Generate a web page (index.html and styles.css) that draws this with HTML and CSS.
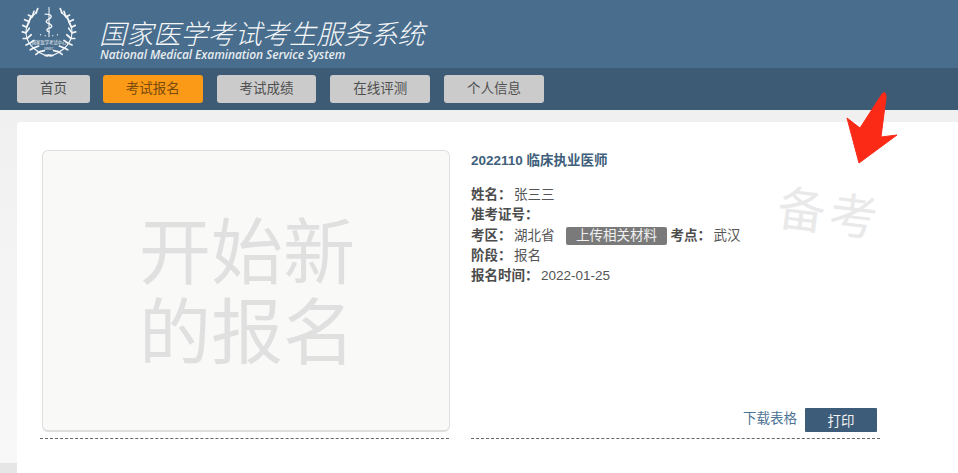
FILE: index.html
```html
<!DOCTYPE html>
<html lang="zh-CN">
<head>
<meta charset="utf-8">
<title>国家医学考试考生服务系统</title>
<link rel="stylesheet" href="styles.css">
</head>
<body>
<div class="page">
  <header class="top">
    <svg class="logo" viewBox="-2 0 64 60" width="60" height="60" aria-hidden="true">
      <defs>
        <g id="half" fill="none" stroke="#f2f5f7" stroke-linecap="round">
          <path class="wreath" d="M17 10C8 17 4 27 6 36C8 45 17 53 28 57"/>
          <path class="leaves" d="M16 11L18 6M12 15L14 9M12 15L8 13M8.500 20L11 14M8.500 20L4 18M6 26L9 20M6 26L2 24M5.500 32L9 27M5.500 32L1.500 31M6.500 38L11 34M6.500 38L2.500 38M9.500 43L14 40M9.500 43L5.500 45M14 48L19 46M14 48L10 50M20 52L25 51M20 52L16 55M26 56L31 56"/>
        </g>
      </defs>
      <use href="#half"/>
      <use href="#half" transform="translate(60 0) scale(-1 1)"/>
      <g fill="none" stroke="#f2f5f7" stroke-linecap="round">
        <path class="staff" d="M30 5V36"/>
        <path class="snake" d="M26 12C33 12 34 15 30 17C26 19 26 21 30 22C34 24 34 26 30 27C27 28 27 30 30 31"/>
      </g>
      <g fill="#f2f5f7">
        <circle cx="21" cy="34" r=".7"/><circle cx="26" cy="35" r=".7"/><circle cx="34" cy="35" r=".7"/><circle cx="39" cy="34" r=".7"/>
        <text class="logo-text" x="30" y="44" text-anchor="middle">国家医学考试中心</text>
        <text class="logo-text small" x="30" y="50" text-anchor="middle">NMEC</text>
      </g>
    </svg>
    <div class="brand">
      <h1>国家医学考试考生服务系统</h1>
      <p>National Medical Examination Service System</p>
    </div>
  </header>
  <nav class="nav">
    <a class="tab tab-home">首页</a>
    <a class="tab active">考试报名</a>
    <a class="tab">考试成绩</a>
    <a class="tab">在线评测</a>
    <a class="tab">个人信息</a>
  </nav>
  <main class="card">
    <section class="left">
      <div class="start"><span>开始新<br>的报名</span></div>
    </section>
    <section class="right">
      <h2>2022110 临床执业医师</h2>
      <ul class="info">
        <li><b>姓名：</b>张三三</li>
        <li><b>准考证号：</b></li>
        <li><b>考区：</b>湖北省<span class="upload">上传相关材料</span><b>考点：</b>武汉</li>
        <li><b>阶段：</b>报名</li>
        <li><b>报名时间：</b>2022-01-25</li>
      </ul>
      <div class="actions">
        <a class="download">下载表格</a>
        <button class="print" type="button">打印</button>
      </div>
    </section>
  </main>
  <div class="note">备考</div>
  <svg class="arrow" viewBox="0 0 60 80" width="60" height="80" aria-hidden="true">
    <path d="M8 27L21 37L43 3Q47 -1 47 7L42 46L58 44L20 72Z" fill="#fb2a17" stroke="#fb2a17" stroke-width="1" stroke-linejoin="round"/>
  </svg>
</div>
</body>
</html>
```
FILE: styles.css
```css
* { box-sizing: border-box; }
html, body { margin: 0; height: 100%; overflow: hidden; }
body {
  background: #f1f1f1;
  font-family: "Liberation Sans", "Noto Sans CJK SC", sans-serif;
  font-size: 13.5px;
  color: #555;
}
.page {
  position: relative;
  height: 473px;
  overflow: hidden;
  background: linear-gradient(to bottom, #f0f0f0 110px, #f8f8f8 463px, #e6e6e6 463px);
}

.top {
  height: 68px;
  background: #486d8d;
  display: flex;
  align-items: flex-start;
  padding-left: 19px;
}
.logo { margin-top: 1px; flex: none; }
.logo .wreath { stroke-width: 1.2; }
.logo .leaves { stroke-width: 1.8; }
.logo .staff { stroke-width: 1.1; }
.logo .snake { stroke-width: 1.5; }
.logo-text { font-size: 4.6px; font-family: "Noto Sans CJK SC", sans-serif; }
.logo-text.small { font-size: 3.6px; }

.brand { margin-left: 21px; color: #fff; }
.brand h1 {
  margin: 17px 0 0 -1px;
  font: italic 300 27.15px/31px "Noto Sans CJK SC", sans-serif;
  color: #f4f6f8;
  white-space: nowrap;
}
.brand p {
  margin: 0;
  font: italic 600 12px/13px "Open Sans", sans-serif;
  color: #e6ebef;
  white-space: nowrap;
  letter-spacing: -.1px;
}

.nav {
  height: 42px;
  background: #3d5b75;
  display: flex;
  align-items: flex-start;
  padding: 7px 0 0 17px;
  gap: 14px;
}
.tab {
  width: 99.7px;
  height: 28px;
  background: #cbcbcb;
  border-radius: 3px;
  color: #4f4f4f;
  line-height: 28px;
  text-align: center;
}
.tab-home { width: 73px; }
.tab.active { background: #fb9a16; color: #7a4a10; }
.tab-home + .tab { margin-left: -1px; }

.card {
  margin: 12px 0 0 17px;
  height: 351px;
  background: #fff;
  border-radius: 4px 0 0 0;
  display: flex;
  padding: 28px 0 0 23px;
  gap: 22px;
}
.left {
  width: 409px;
  height: 289px;
  border-bottom: 1px dashed #666;
  padding: 0 0 6px 2px;
  flex: none;
}
.start {
  height: 282px;
  width: 408px;
  background: #f9f9f8;
  border: 1px solid #dedede;
  border-bottom-width: 2px;
  border-radius: 6px;
  display: flex;
  justify-content: center;
  color: #e0e0e0;
  font: 72px/80px "Noto Sans CJK SC", sans-serif;
  padding-top: 56px;
}
.start span { display: block; margin-left: 2px; }

.right {
  width: 409px;
  height: 289px;
  border-bottom: 1px dashed #666;
  display: flex;
  flex-direction: column;
  flex: none;
}
.right h2 {
  margin: 1px 0 0;
  font-size: 13.5px;
  line-height: 20px;
  font-weight: bold;
  color: #3f5f7b;
}
.info { list-style: none; margin: 14px 0 0; padding: 0; line-height: 20.3px; }
.info li { height: 20.3px; white-space: nowrap; }
.info b {
  color: #4c4c4c;
  margin-right: 2.5px;
  font-family: "Liberation Sans", "Noto Sans CJK TC", sans-serif;
}
.upload {
  display: inline-block;
  width: 101px;
  height: 18px;
  margin: 0 3.5px 0 11.5px;
  background: #7a7a7a;
  border-radius: 2px;
  color: #f1f1f1;
  line-height: 18px;
  text-align: center;
}
.actions {
  margin-top: auto;
  margin-bottom: 6px;
  display: flex;
  justify-content: flex-end;
  align-items: center;
  gap: 8px;
  padding-right: 3px;
}
.download { color: #4d7394; margin-bottom: 5px; }
.print {
  width: 72px;
  height: 24px;
  padding: 0;
  border: 0;
  border-radius: 1px;
  background: #3c5c79;
  color: #f2f2f2;
  font: inherit;
}

.note {
  position: absolute;
  left: 778px;
  top: 180px;
  font: 48px/60px "Noto Sans CJK SC", sans-serif;
  letter-spacing: 4px;
  color: #e9e9e9;
  transform: rotate(7deg);
  white-space: nowrap;
}
.arrow { position: absolute; left: 839px; top: 91px; }
```
